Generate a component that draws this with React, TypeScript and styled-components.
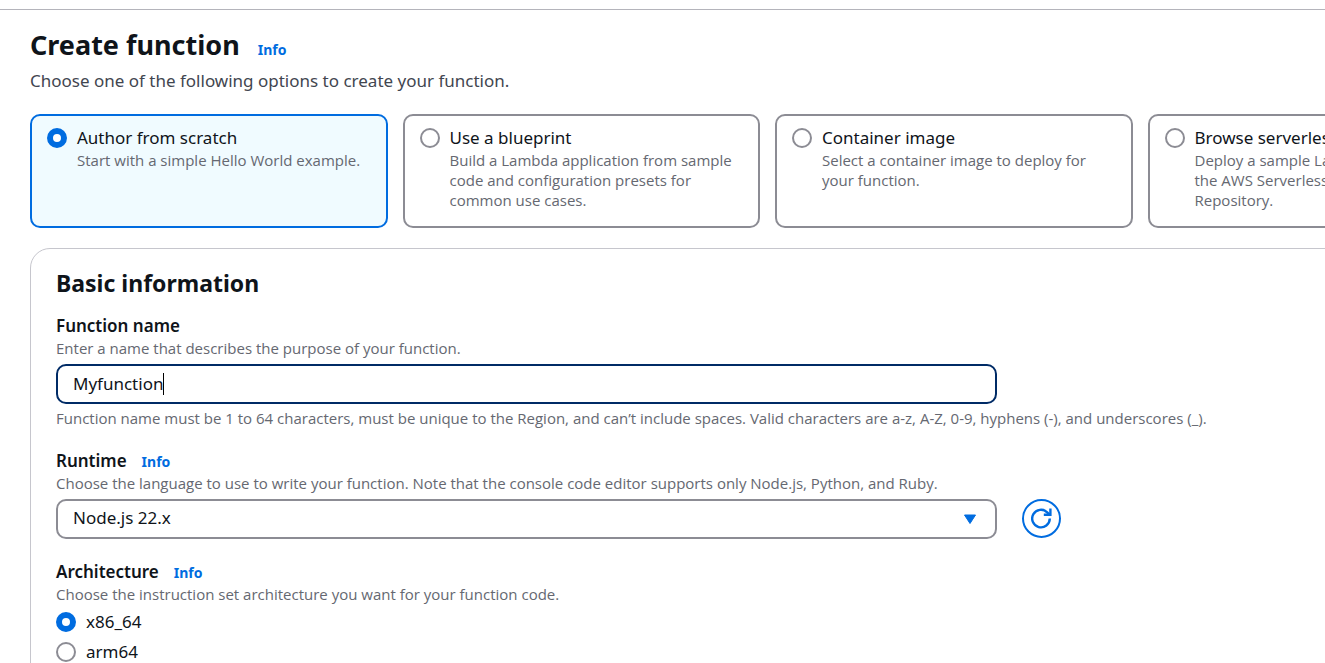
import React, { useState } from "react";
import styled, { createGlobalStyle } from "styled-components";

const color = {
  text: "#0f141a",
  body: "#424650",
  hint: "#656871",
  link: "#006ce0",
  border: "#8c8c94",
  divider: "#c6c6cd",
  focus: "#002b66",
  selected: "#f0fbff",
};

const GlobalStyle = createGlobalStyle`
  *, *::before, *::after { box-sizing: border-box; }
  html { overflow-x: hidden; scrollbar-width: none; }
  body {
    margin: 0;
    background: #fff;
    color: ${color.text};
    font: 400 17px/25px "Noto Sans", "Open Sans", sans-serif;
  }
  input, select, button { font: inherit; color: inherit; }
`;

const TopBar = styled.header`
  height: 10px;
  border-bottom: 1px solid #b4b4bb;
`;

const Page = styled.main`
  min-width: 1535px;
  padding: 16px 30px 30px;
`;

const TitleRow = styled.div`
  display: flex;
  align-items: baseline;
  gap: 18px;
`;

const Title = styled.h1`
  margin: 0;
  font-size: 27px;
  font-weight: 700;
  line-height: 37px;
`;

const InfoLink = styled.a`
  color: ${color.link};
  font-size: 14px;
  font-weight: 700;
  line-height: 20px;
  text-decoration: none;
`;

const Intro = styled.p`
  margin: 5px 0 21px;
  color: ${color.body};
`;

const Cards = styled.div`
  display: grid;
  grid-template-columns: repeat(4, 1fr);
  gap: 15px;
  margin-bottom: 20px;
`;

const Card = styled.label<{ $selected: boolean }>`
  display: flex;
  gap: 10px;
  padding: 9px 12px 16px 15px;
  border: 2px solid ${(p) => (p.$selected ? color.link : color.border)};
  border-radius: 10px;
  background: ${(p) => (p.$selected ? color.selected : "#fff")};
`;

const CardText = styled.span`
  display: flex;
  flex-direction: column;
`;

const Hint = styled.span`
  display: block;
  color: ${color.hint};
  font-family: "Open Sans", "Noto Sans", sans-serif;
  font-size: 15px;
  line-height: 20px;
`;

const Radio = styled.input.attrs({ type: "radio" })`
  appearance: none;
  flex: none;
  width: 20px;
  height: 20px;
  margin: 3px 0 0;
  border: 2px solid ${color.border};
  border-radius: 50%;
  background: #fff;

  &:checked {
    border: 6px solid ${color.link};
  }
`;

const Panel = styled.section`
  display: flex;
  flex-direction: column;
  gap: 20px;
  padding: 19px 25px 25px;
  border: 1px solid ${color.divider};
  border-radius: 20px;
`;

const PanelTitle = styled.h2`
  margin: 0 0 -5px;
  font-size: 23px;
  font-weight: 700;
  line-height: 30px;
`;

const Field = styled.div`
  display: flex;
  flex-direction: column;
`;

const LabelRow = styled.div`
  display: flex;
  align-items: baseline;
  gap: 15px;
`;

const Label = styled.label`
  font-weight: 600;
`;

const ControlRow = styled.div`
  display: flex;
  align-items: flex-start;
  gap: 25px;
  margin: 6px 0 4px;

  &:last-child { margin-bottom: 0; }
`;

const TextBox = styled.div`
  display: flex;
  align-items: center;
  flex: 1;
  max-width: 941px;
  height: 40px;
  padding: 0 15px;
  border: 2px solid ${color.focus};
  border-radius: 10px;
`;

const TextInput = styled.input`
  field-sizing: content;
  max-width: 100%;
  height: 26px;
  padding: 0 0 2px;
  border: 0;
  outline: 0;
  background: none;
  caret-color: transparent;
`;

const Caret = styled.span`
  width: 1px;
  height: 22px;
  background: #000;
`;

const SelectBox = styled.div`
  display: grid;
  align-items: center;
  flex: 1;
  max-width: 941px;

  > * { grid-area: 1 / 1; }
`;

const Select = styled.select`
  appearance: none;
  width: 100%;
  height: 40px;
  padding: 0 45px 4px 15px;
  border: 2px solid ${color.border};
  border-radius: 10px;
  background: #fff;
`;

const Arrow = styled.svg`
  justify-self: end;
  margin-right: 20px;
  pointer-events: none;
`;

const RefreshButton = styled.button`
  display: grid;
  place-items: center;
  width: 39px;
  height: 39px;
  padding: 0;
  border: 2px solid ${color.link};
  border-radius: 50%;
  background: #fff;
  color: ${color.link};
`;

const RadioList = styled.div`
  display: flex;
  flex-direction: column;
  gap: 5px;
  margin-top: 5px;
`;

const RadioRow = styled.label`
  display: flex;
  gap: 10px;
`;

const methods = [
  { id: "scratch", name: "Author from scratch", text: "Start with a simple Hello World example." },
  {
    id: "blueprint",
    name: "Use a blueprint",
    text: "Build a Lambda application from sample code and configuration presets for common use cases.",
  },
  { id: "container", name: "Container image", text: "Select a container image to deploy for your function." },
  {
    id: "serverless",
    name: "Browse serverless app repository",
    text: "Deploy a sample Lambda application from the AWS Serverless Application Repository.",
  },
];

const architectures = ["x86_64", "arm64"];

export default function App() {
  const [method, setMethod] = useState("scratch");
  const [name, setName] = useState("Myfunction");
  const [arch, setArch] = useState("x86_64");

  return (
    <>
      <GlobalStyle />
      <TopBar />
      <Page>
        <TitleRow>
          <Title>Create function</Title>
          <InfoLink href="#create">Info</InfoLink>
        </TitleRow>
        <Intro>Choose one of the following options to create your function.</Intro>

        <Cards role="radiogroup">
          {methods.map((m) => (
            <Card key={m.id} $selected={m.id === method}>
              <Radio name="method" checked={m.id === method} onChange={() => setMethod(m.id)} />
              <CardText>
                <span>{m.name}</span>
                <Hint>{m.text}</Hint>
              </CardText>
            </Card>
          ))}
        </Cards>

        <Panel>
          <PanelTitle>Basic information</PanelTitle>

          <Field>
            <LabelRow>
              <Label htmlFor="fn-name">Function name</Label>
            </LabelRow>
            <Hint>Enter a name that describes the purpose of your function.</Hint>
            <ControlRow>
              <TextBox>
                <TextInput id="fn-name" value={name} onChange={(e) => setName(e.target.value)} />
                <Caret />
              </TextBox>
            </ControlRow>
            <Hint>
              Function name must be 1 to 64 characters, must be unique to the Region, and can’t include spaces. Valid
              characters are a-z, A-Z, 0-9, hyphens (-), and underscores (_).
            </Hint>
          </Field>

          <Field>
            <LabelRow>
              <Label htmlFor="runtime">Runtime</Label>
              <InfoLink href="#runtime">Info</InfoLink>
            </LabelRow>
            <Hint>
              Choose the language to use to write your function. Note that the console code editor supports only
              Node.js, Python, and Ruby.
            </Hint>
            <ControlRow>
              <SelectBox>
                <Select id="runtime" defaultValue="node22">
                  <option value="node22">Node.js 22.x</option>
                </Select>
                <Arrow width="14" height="12" viewBox="0 0 14 12" aria-hidden="true">
                  <path d="M1.5 2h11L7 10.5z" fill={color.link} stroke={color.link} strokeLinejoin="round" />
                </Arrow>
              </SelectBox>
              <RefreshButton type="button" aria-label="Refresh runtimes">
                <svg width="21" height="21" viewBox="0 0 21 21" fill="none" stroke="currentColor" strokeWidth="2.4">
                  <path d="M18.8 10.6a8.8 8.8 0 1 1-2.6-6.3L19 7" />
                  <path d="M19.4 0.5v6.2h-6.6" />
                </svg>
              </RefreshButton>
            </ControlRow>
          </Field>

          <Field role="radiogroup" aria-labelledby="arch-label">
            <LabelRow>
              <Label as="span" id="arch-label">Architecture</Label>
              <InfoLink href="#architecture">Info</InfoLink>
            </LabelRow>
            <Hint>Choose the instruction set architecture you want for your function code.</Hint>
            <RadioList>
              {architectures.map((a) => (
                <RadioRow key={a}>
                  <Radio name="arch" checked={a === arch} onChange={() => setArch(a)} />
                  {a}
                </RadioRow>
              ))}
            </RadioList>
          </Field>
        </Panel>
      </Page>
    </>
  );
}
